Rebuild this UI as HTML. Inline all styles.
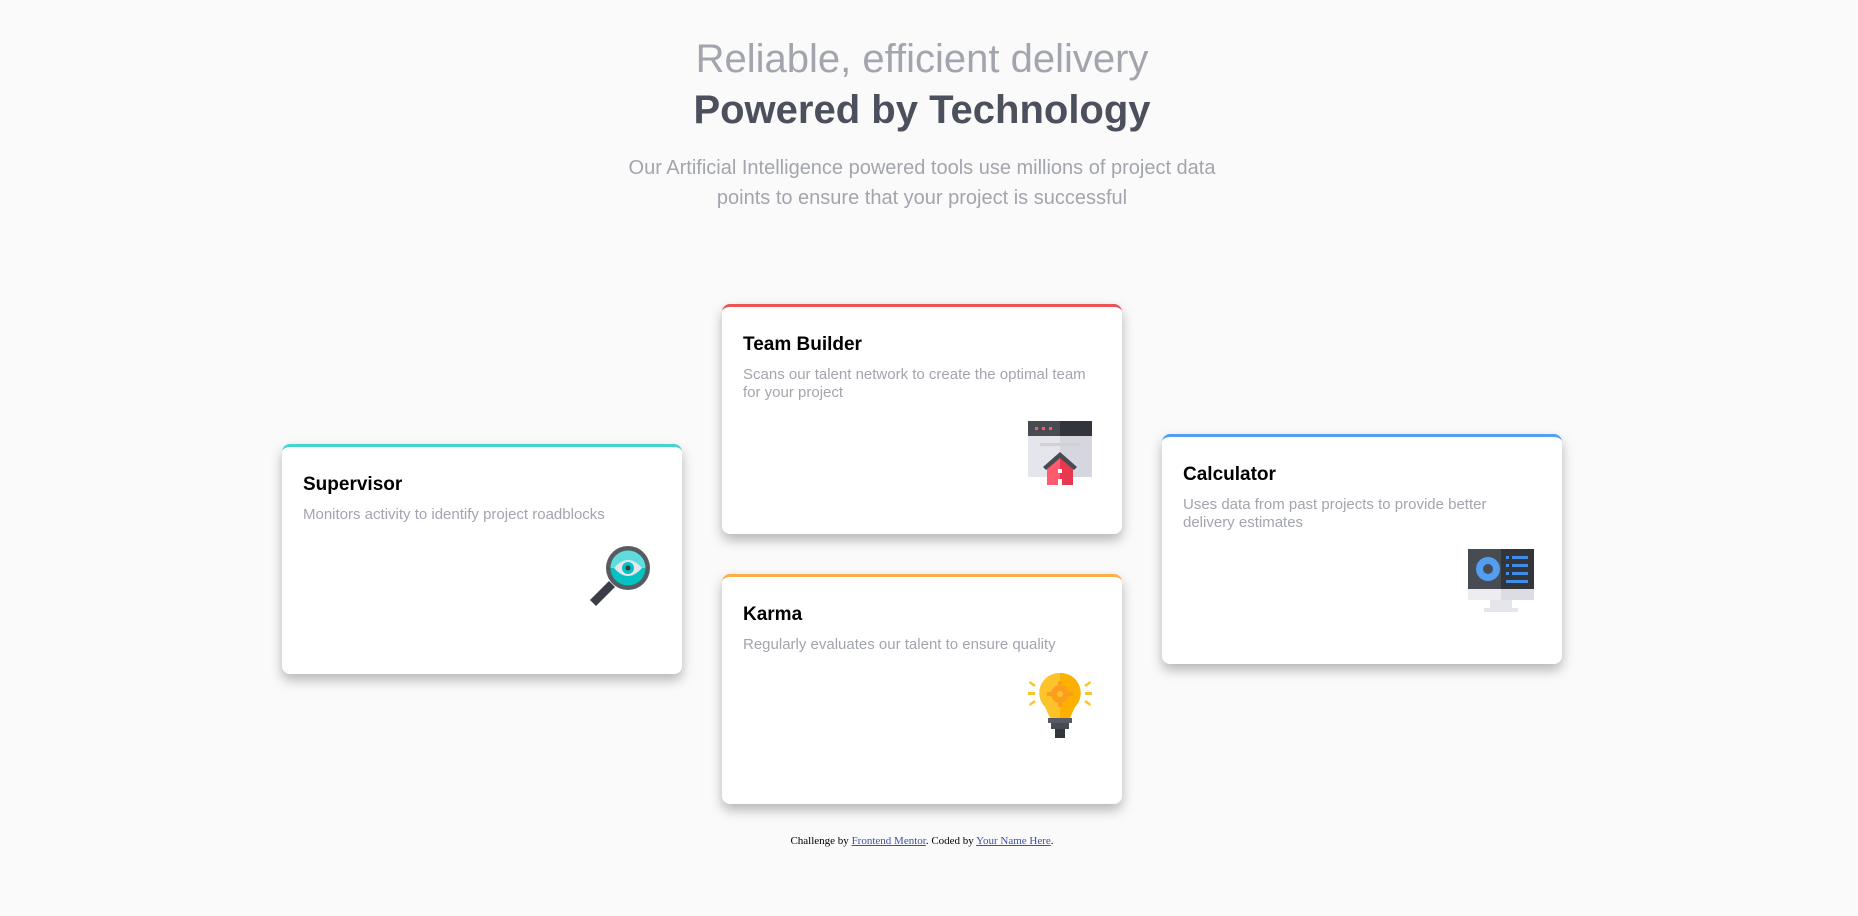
<!DOCTYPE html>
<html><head><meta charset="utf-8"><style>
body{margin:0;width:1858px;height:916px;background:#fafafa;font-family:"Liberation Sans",sans-serif;position:relative;overflow:hidden}
.h{position:absolute;left:-7px;width:1858px;text-align:center;margin:0}
.h1{top:36px;font-size:40px;color:#a3a5ae;font-weight:400;line-height:46px}
.h2{top:87px;font-size:40px;color:#4c4f5c;font-weight:700;line-height:46px}
.p{top:153px;font-size:20px;color:#a3a5ae;line-height:30px}
.card{position:absolute;width:400px;height:230px;background:#fff;border-radius:8px;box-shadow:0 6px 12px rgba(0,0,0,.28);box-sizing:border-box;border-top:3px solid;padding:26px 22px 0 21px}
.card h3{margin:0;font-size:19px;line-height:24px;color:#000}
.card p{margin:9px 0 0;font-size:15px;line-height:17.5px;color:#a3a5ae;width:355px}
.card svg{position:absolute;right:30px;bottom:49px}
.f{position:absolute;left:-7px;width:1858px;top:835px;text-align:center;font:11px "Liberation Serif",serif;color:#000}
.f a{color:#3e52a3}
</style></head><body>
<h2 class="h h1">Reliable, efficient delivery</h2>
<h1 class="h h2">Powered by Technology</h1>
<div class="h p">Our Artificial Intelligence powered tools use millions of project data<br>points to ensure that your project is successful</div>

<div class="card" style="left:282px;top:444px;border-color:#44d3d2">
<h3>Supervisor</h3><p>Monitors activity to identify project roadblocks</p>
<svg width="64" height="64" viewBox="0 0 64 64" style="bottom:66px"><path d="M21 37 L2 56 L8 62 L27 43Z" fill="#3b3f45"/><circle cx="40" cy="24" r="22" fill="#585c62"/><circle cx="40" cy="24" r="17.5" fill="#00c3c2"/><path d="M22.5 24 A17.5 17.5 0 0 1 57.5 24Z" fill="#5fdcdb"/><path d="M26 24 Q40 8 54 24 Q40 40 26 24Z" fill="#e5e5ec"/><circle cx="40" cy="24" r="6" fill="#00c3c2"/><circle cx="40" cy="24" r="2.5" fill="#3b3f45"/></svg>
</div>

<div class="card" style="left:722px;top:304px;border-color:#ea5454">
<h3>Team Builder</h3><p>Scans our talent network to create the optimal team for your project</p>
<svg width="64" height="64" viewBox="0 0 64 64"><rect x="0" y="0" width="64" height="56" fill="#e5e5ec"/><rect x="32" y="15" width="32" height="41" fill="#d6d6df"/><rect x="0" y="0" width="32" height="15" fill="#474b52"/><rect x="32" y="0" width="32" height="15" fill="#32363b"/><rect x="7" y="6" width="3" height="3" fill="#ff5a6e"/><rect x="14" y="6" width="3" height="3" fill="#ff5a6e"/><rect x="21" y="6" width="3" height="3" fill="#ff5a6e"/><rect x="12" y="22" width="40" height="3" fill="#d0d0da"/><path d="M19 45 L32 34 L45 45 L45 64 L19 64Z" fill="#ff5a6e"/><path d="M32 34 L45 45 L45 64 L32 64Z" fill="#e8384f"/><path d="M15 46 L32 31 L49 46 L46 49 L32 37 L18 49Z" fill="#474b52"/><rect x="30" y="48" width="4" height="4" fill="#fff"/><rect x="30" y="58" width="4" height="6" fill="#fff"/></svg>
</div>

<div class="card" style="left:722px;top:574px;border-color:#fcae4a">
<h3>Karma</h3><p>Regularly evaluates our talent to ensure quality</p>
<svg width="64" height="70" viewBox="0 0 64 70" style="bottom:64px"><path d="M32 3 A20 20 0 0 0 17 37 L22 48 L32 48Z" fill="#fcc42a"/><path d="M32 3 A20 20 0 0 1 47 37 L42 48 L32 48Z" fill="#fcb000"/><circle cx="32" cy="24" r="9" fill="#fc9d1d"/><g fill="#fc9d1d"><rect x="30" y="11" width="4" height="26"/><rect x="19" y="22" width="26" height="4"/></g><circle cx="32" cy="24" r="3" fill="#fcc42a"/><g fill="#fcc42a"><rect x="0" y="22" width="7" height="3"/><rect x="57" y="22" width="7" height="3"/><path d="M2 11 L8 15 L6 17 L1 13Z"/><path d="M62 11 L56 15 L58 17 L63 13Z"/><path d="M2 36 L8 32 L6 30 L1 34Z"/><path d="M62 36 L56 32 L58 30 L63 34Z"/></g><rect x="20" y="48" width="24" height="5" fill="#585c62"/><rect x="23" y="53" width="18" height="6" fill="#474b52"/><rect x="27" y="59" width="10" height="9" fill="#32363b"/></svg>
</div>

<div class="card" style="left:1162px;top:434px;border-color:#549ef2">
<h3>Calculator</h3><p>Uses data from past projects to provide better delivery estimates</p>
<svg width="66" height="66" viewBox="0 0 66 66" style="bottom:49px;right:28px"><rect x="0" y="0" width="33" height="40" fill="#474b52"/><rect x="33" y="0" width="33" height="40" fill="#32363b"/><rect x="0" y="40" width="66" height="11" fill="#ececf1"/><rect x="33" y="40" width="33" height="11" fill="#dcdce4"/><rect x="22" y="51" width="22" height="8" fill="#e5e5ec"/><rect x="16" y="59" width="34" height="4" fill="#e5e5ec"/><circle cx="20" cy="20" r="12" fill="#549ef2"/><circle cx="20" cy="20" r="5" fill="#474b52"/><g fill="#3f8de6"><rect x="38" y="7" width="3" height="3"/><rect x="44" y="7" width="16" height="3"/><rect x="38" y="15" width="3" height="3"/><rect x="44" y="15" width="16" height="3"/><rect x="38" y="23" width="3" height="3"/><rect x="44" y="23" width="16" height="3"/><rect x="38" y="31" width="22" height="3"/></g></svg>
</div>

<div class="f">Challenge by <a href="#">Frontend Mentor</a>. Coded by <a href="#">Your Name Here</a>.</div>
</body></html>
